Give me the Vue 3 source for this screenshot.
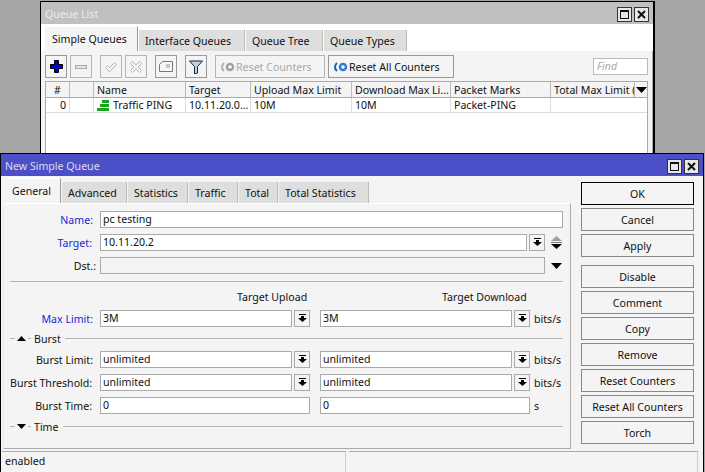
<template>
  <div class="desktop">
    <!-- background window -->
    <section class="win queue-win">
      <header class="titlebar idle">
        <span>Queue List</span>
        <div class="win-btns">
          <button class="win-btn"><i class="max-ico"></i></button>
          <button class="win-btn"><svg viewBox="0 0 9 9" width="9" height="9"><path d="M1 1l7 7M8 1L1 8" stroke="#111" stroke-width="2" fill="none"/></svg></button>
        </div>
      </header>
      <div class="q-tabs">
        <span v-for="(t, i) in queueTabs" :key="t.label" class="tab" :class="{ active: i === 0 }" :style="{ width: t.w + 'px' }">{{ t.label }}</span>
      </div>
      <div class="q-panel">
        <div class="toolbar">
          <button class="tool">
            <svg viewBox="0 0 13 13" width="13" height="13"><path d="M4.500.5h4v4h4v4h-4v4h-4v-4h-4v-4h4z" fill="#0000d8" stroke="#000"/></svg>
          </button>
          <button class="tool off">
            <svg viewBox="0 0 14 14" width="14" height="14"><rect x="1.500" y="5.500" width="11" height="3" fill="#e4e4e4" stroke="#aaa"/></svg>
          </button>
          <button class="tool off gap-l">
            <svg viewBox="0 0 14 14" width="14" height="14"><path d="M1.500 7.500l2-2 2 2 5-5 2 2-7 7.500z" fill="#f4f4f4" stroke="#b4b4b4"/></svg>
          </button>
          <button class="tool off">
            <svg viewBox="0 0 14 14" width="14" height="14"><path d="M3.500 1.500L7 5l3.500-3.500 2 2L9 7l3.500 3.500-2 2L7 9l-3.500 3.500-2-2L5 7 1.500 3.500z" fill="#f4f4f4" stroke="#b4b4b4"/></svg>
          </button>
          <button class="tool gap-l">
            <svg viewBox="0 0 14 14" width="14" height="14"><path d="M.5 11.500v-7l3-3h10v10z" fill="#f6f6f6" stroke="#777"/><path d="M7 5h4M7 7h4" stroke="#999"/></svg>
          </button>
          <button class="tool gap-l">
            <svg viewBox="0 0 14 14" width="14" height="14"><path d="M.5 1h13L8.500 6.500v6.500l-3 1V6.500z" fill="#bcd4ea" stroke="#222"/></svg>
          </button>
          <button class="tool wide reset off gap-l">
            <svg viewBox="0 0 16 10" width="16" height="10"><path d="M4 1A5 5 0 0 0 4 9" fill="none" stroke="#b0b0b0" stroke-width="2"/><circle cx="10" cy="5" r="3" fill="#fff" stroke="#a0a0a0" stroke-width="2.500"/></svg>
            Reset Counters
          </button>
          <button class="tool wide reset-all">
            <svg viewBox="0 0 16 10" width="16" height="10"><path d="M4 1A5 5 0 0 0 4 9" fill="none" stroke="#1a5fa8" stroke-width="2"/><circle cx="10" cy="5" r="3" fill="#fff" stroke="#2a80d0" stroke-width="2.500"/></svg>
            Reset All Counters
          </button>
          <span class="find">Find</span>
        </div>
        <div class="table">
          <div class="t-row head">
            <span v-for="c in columns" :key="c.label" class="cell" :class="c.cls" :style="{ width: c.w + 'px' }">{{ c.label }}</span>
            <span class="col-menu"><svg viewBox="0 0 11 6" width="11" height="6"><path d="M0 0h11L5.500 6z" fill="#000"/></svg></span>
          </div>
          <div class="t-row">
            <span class="cell num" :style="{ width: '24px' }">0</span>
            <span class="cell" :style="{ width: '24px' }"></span>
            <span class="cell name" :style="{ width: '92px' }">
              <svg viewBox="0 0 12 11" width="12" height="11"><path d="M5 0h7v3H5zM3 4h9v3H3zM0 8h12v3H0z" fill="#1aa51a"/></svg>
              Traffic PING
            </span>
            <span class="cell" :style="{ width: '65px' }">10.11.20.0...</span>
            <span class="cell" :style="{ width: '101px' }">10M</span>
            <span class="cell" :style="{ width: '99px' }">10M</span>
            <span class="cell" :style="{ width: '100px' }">Packet-PING</span>
            <span class="cell last">&nbsp;</span>
          </div>
        </div>
      </div>
    </section>

    <!-- front dialog -->
    <section class="win dialog">
      <header class="titlebar">
        <span>New Simple Queue</span>
        <div class="win-btns">
          <button class="win-btn"><i class="max-ico"></i></button>
          <button class="win-btn"><svg viewBox="0 0 9 9" width="9" height="9"><path d="M1 1l7 7M8 1L1 8" stroke="#111" stroke-width="2" fill="none"/></svg></button>
        </div>
      </header>
      <div class="dlg-body">
        <div class="dlg-main">
          <div class="d-tabs">
            <span v-for="(t, i) in dialogTabs" :key="t.label" class="tab" :class="{ active: i === 0 }" :style="{ width: t.w + 'px' }">{{ t.label }}</span>
          </div>
          <div class="form">
            <div class="row">
              <label class="blue">Name:</label>
              <span class="field grow">pc testing</span>
            </div>
            <div class="row with-arrows">
              <label class="blue tight">Target:</label>
              <span class="field grow">10.11.20.2</span>
              <button class="drop"><svg viewBox="0 0 9 9" width="9" height="9"><path d="M1 0h7v1H1zM3 2h3v2h3L4.500 8 0 4h3z" fill="#000"/></svg></button>
              <svg class="arrows" viewBox="0 0 11 13" width="11" height="13"><path d="M5.500 0L11 5H0z" fill="#9aa09a"/><path d="M0 6h11v1H0z" fill="#777"/><path d="M0 8h11L5.500 13z" fill="#000"/></svg>
            </div>
            <div class="row with-arrows">
              <label class="dst">Dst.:</label>
              <span class="field grow disabled"></span>
              <svg class="arrows" viewBox="0 0 11 6" width="11" height="6"><path d="M0 0h11L5.500 6z" fill="#000"/></svg>
            </div>
            <div class="sep"></div>
            <div class="heads">
              <span>Target Upload</span>
              <span>Target Download</span>
            </div>
            <template v-for="r in limitRows" :key="r.label">
              <div v-if="r.section" class="section burst">
                <i class="dash"></i>
                <svg viewBox="0 0 9 5" width="9" height="5"><path d="M0 5h9L4.500 0z" fill="#000"/></svg>
                <i class="dash short"></i>
                <span>{{ r.section }}</span>
                <i class="rule"></i>
              </div>
              <div v-else class="row">
                <label :class="r.labelCls">{{ r.label }}</label>
                <span class="pair">
                  <span class="field grow">{{ r.up }}</span>
                  <button class="drop"><svg viewBox="0 0 9 9" width="9" height="9"><path d="M1 0h7v1H1zM3 2h3v2h3L4.500 8 0 4h3z" fill="#000"/></svg></button>
                </span>
                <span class="pair">
                  <span class="field grow">{{ r.down }}</span>
                  <button class="drop"><svg viewBox="0 0 9 9" width="9" height="9"><path d="M1 0h7v1H1zM3 2h3v2h3L4.500 8 0 4h3z" fill="#000"/></svg></button>
                </span>
                <span class="unit">bits/s</span>
              </div>
            </template>
            <div class="row">
              <label class="tight">Burst Time:</label>
              <span class="pair"><span class="field grow">0</span></span>
              <span class="pair"><span class="field grow">0</span></span>
              <span class="unit">s</span>
            </div>
            <div class="section time">
              <i class="dash"></i>
              <svg viewBox="0 0 9 5" width="9" height="5"><path d="M0 0h9L4.500 5z" fill="#000"/></svg>
              <i class="dash short"></i>
              <span>Time</span>
              <i class="rule"></i>
            </div>
          </div>
        </div>
        <aside class="actions">
          <button v-for="b in actions" :key="b" class="act" :class="{ primary: b === 'OK', apart: b === 'Disable' }">{{ b }}</button>
        </aside>
      </div>
      <footer class="status">
        <span class="st-cell first">enabled</span>
        <span class="st-cell"></span>
      </footer>
    </section>
  </div>
</template>

<script setup>
const queueTabs = [
  { label: 'Simple Queues', w: 93 },
  { label: 'Interface Queues', w: 106 },
  { label: 'Queue Tree', w: 77 },
  { label: 'Queue Types', w: 83 }
]
const dialogTabs = [
  { label: 'General', w: 56 },
  { label: 'Advanced', w: 65 },
  { label: 'Statistics', w: 60 },
  { label: 'Traffic', w: 49 },
  { label: 'Total', w: 39 },
  { label: 'Total Statistics', w: 90 }
]
const columns = [
  { label: '#', w: 24, cls: 'center' },
  { label: '', w: 24 },
  { label: 'Name', w: 92 },
  { label: 'Target', w: 65 },
  { label: 'Upload Max Limit', w: 101 },
  { label: 'Download Max Li...', w: 99 },
  { label: 'Packet Marks', w: 100 },
  { label: 'Total Max Limit (', w: 84 }
]
const limitRows = [
  { label: 'Max Limit:', up: '3M', down: '3M', labelCls: 'blue' },
  { label: 'burst-head', section: 'Burst' },
  { label: 'Burst Limit:', up: 'unlimited', down: 'unlimited' },
  { label: 'Burst Threshold:', up: 'unlimited', down: 'unlimited', labelCls: 'thresh' }
]
const actions = ['OK', 'Cancel', 'Apply', 'Disable', 'Comment', 'Copy', 'Remove', 'Reset Counters', 'Reset All Counters', 'Torch']
</script>

<style scoped>
.desktop {
  position: relative;
  width: 705px;
  height: 472px;
  overflow: hidden;
  background: #a6a6a6;
  font-family: "Noto Sans", sans-serif;
  font-size: 10.6px;
  color: #111;
}
.win {
  position: absolute;
  box-sizing: border-box;
  border: 1px solid #000;
  background: #f4f4f4;
}
.queue-win {
  left: 40px;
  top: 1px;
  width: 615px;
  height: 170px;
  border-right-width: 2px;
  background: #fff;
}
.dialog {
  left: 0;
  top: 153px;
  width: 704px;
  height: 322px;
}
.titlebar {
  display: flex;
  align-items: center;
  justify-content: space-between;
  box-sizing: border-box;
  height: 22px;
  padding: 2px 4px 0;
  background: #4b50c8;
  color: #dcdcf0;
}
.titlebar.idle {
  background: #c0c0c0;
  color: #ececec;
}
.win-btns {
  display: flex;
  gap: 2px;
}
.win-btn {
  display: flex;
  align-items: center;
  justify-content: center;
  box-sizing: border-box;
  width: 15px;
  height: 15px;
  padding: 0;
  border: 1px solid #333;
  background: #e8e8e8;
}
.max-ico {
  width: 9px;
  height: 9px;
  box-sizing: border-box;
  border: 1px solid #111;
  border-top-width: 2px;
}
.q-tabs,
.d-tabs {
  display: flex;
  align-items: flex-end;
  height: 27px;
  padding-left: 4px;
}
.q-tabs {
  background: #fff;
}
.tab {
  display: flex;
  align-items: center;
  flex: none;
  box-sizing: border-box;
  height: 21px;
  padding-left: 6px;
  margin-right: 1px;
  background: #dedede;
  border-right: 1px solid #bbb;
  white-space: nowrap;
}
.tab.active {
  height: 25px;
  padding-left: 7px;
  background: #f4f4f4;
  border-right: 1px solid #999;
  border-top: 1px solid #fff;
}
.q-panel {
  display: flex;
  flex-direction: column;
  gap: 3px;
  height: 130px;
  padding: 4px 4px 0;
  background: #f4f4f4;
  border-right: 1px solid #aaa;
}
.toolbar {
  display: flex;
  align-items: center;
  gap: 3px;
}
.tool {
  display: flex;
  align-items: center;
  justify-content: center;
  flex: none;
  box-sizing: border-box;
  width: 22px;
  height: 23px;
  padding: 0;
  border: 1px solid #999;
  background: #f4f4f4;
  font: inherit;
  color: #111;
}
.tool.wide {
  justify-content: flex-start;
  padding-left: 4px;
}
.tool.reset {
  width: 110px;
}
.tool.reset-all {
  width: 126px;
}
.tool.off {
  color: #a8a8a8;
  border-color: #b4b4b4;
}
.gap-l {
  margin-left: 5px;
}
.find {
  box-sizing: border-box;
  width: 55px;
  height: 17px;
  margin-left: auto;
  padding-left: 3px;
  border: 1px solid #bbb;
  background: #fff;
  color: #aaa;
  font-style: italic;
  line-height: 15px;
}
.table {
  flex: 1;
  border: 1px solid #aaa;
  border-bottom: 0;
  background: #fff;
}
.t-row {
  display: flex;
  height: 14px;
  border-bottom: 1px solid #ddd;
  line-height: 15px;
}
.t-row.head {
  height: 15px;
  border-bottom: 1px solid #aaa;
  background: #f4f4f4;
  line-height: 17px;
}
.cell {
  flex: none;
  box-sizing: border-box;
  padding-left: 3px;
  border-right: 1px solid #bbb;
  overflow: hidden;
  white-space: nowrap;
}
.t-row:not(.head) .cell {
  border-right-color: #ddd;
}
.cell.center {
  padding-left: 0;
  text-align: center;
}
.cell.num {
  padding-right: 3px;
  text-align: right;
}
.cell.last {
  flex: 1;
  border-right: 0;
}
.cell.name {
  display: flex;
  align-items: center;
  gap: 4px;
}
.col-menu {
  display: flex;
  flex: 1;
  align-items: center;
  justify-content: center;
}
.dlg-body {
  display: flex;
  height: 275px;
}
.dlg-main {
  flex: none;
  width: 570px;
}
.form {
  box-sizing: border-box;
  width: 568px;
  height: 246px;
  margin-left: 2px;
  padding: 7px 7px 0 6px;
  border-top: 1px solid #fff;
  border-right: 1px solid #aaa;
  border-bottom: 1px solid #aaa;
  border-left: 1px solid #ebebeb;
}
.row {
  display: flex;
  align-items: center;
  gap: 2px;
  height: 17px;
  margin-bottom: 6px;
}
.row.with-arrows {
  padding-right: 1px;
}
.row label {
  flex: none;
  box-sizing: border-box;
  width: 88px;
  padding-right: 5px;
  text-align: right;
  white-space: nowrap;
}
.blue {
  color: #2222d8;
}
.row label.tight {
  padding-right: 6px;
}
.row label.dst {
  padding-right: 2px;
}
.row label.thresh {
  padding-right: 9px;
}
.field {
  box-sizing: border-box;
  height: 17px;
  padding-left: 2px;
  border: 1px solid #aaa;
  background: #fff;
  line-height: 14px;
}
.field.grow {
  flex: 1;
  min-width: 0;
}
.field.disabled {
  background: #f4f4f4;
}
.drop {
  display: flex;
  align-items: center;
  justify-content: center;
  flex: none;
  box-sizing: border-box;
  width: 16px;
  height: 17px;
  padding: 0;
  border: 1px solid #aaa;
  background: #f4f4f4;
}
.arrows {
  flex: none;
  margin-left: 4px;
}
.sep {
  height: 1px;
  margin-top: 7px;
  background: #b4b4b4;
}
.heads {
  display: flex;
  align-items: center;
  box-sizing: border-box;
  height: 28px;
  padding: 2px 0 0 227px;
}
.heads span:first-child {
  flex: none;
  width: 205px;
}
.pair {
  display: flex;
  flex: none;
  gap: 2px;
  width: 210px;
}
.pair:first-of-type {
  margin-right: 8px;
}
.unit {
  margin-left: 2px;
}
.section {
  display: flex;
  align-items: center;
  gap: 2px;
}
.section.burst {
  height: 11px;
  margin-bottom: 7px;
}
.section.time {
  height: 13px;
}
.section span {
  margin: 0 2px 0 1px;
}
.dash {
  flex: none;
  width: 5px;
  height: 1px;
  background: #b4b4b4;
}
.dash.short {
  width: 3px;
}
.rule {
  flex: 1;
  height: 1px;
  background: #b4b4b4;
}
.actions {
  display: flex;
  flex-direction: column;
  gap: 3px;
  padding: 6px 0 0 10px;
}
.act {
  flex: none;
  box-sizing: border-box;
  width: 113px;
  height: 23px;
  padding: 0;
  border: 1px solid #888;
  background: #f4f4f4;
  font: inherit;
  color: #111;
}
.act.primary {
  border-color: #000;
}
.act.apart {
  margin-top: 5px;
}
.status {
  display: flex;
  gap: 3px;
  padding: 0 5px 0 1px;
}
.st-cell {
  flex: 1;
  box-sizing: border-box;
  height: 21px;
  padding-left: 3px;
  border-top: 1px solid #aaa;
  border-right: 1px solid #ccc;
  line-height: 19px;
}
.st-cell.first {
  flex: none;
  width: 344px;
}
</style>
